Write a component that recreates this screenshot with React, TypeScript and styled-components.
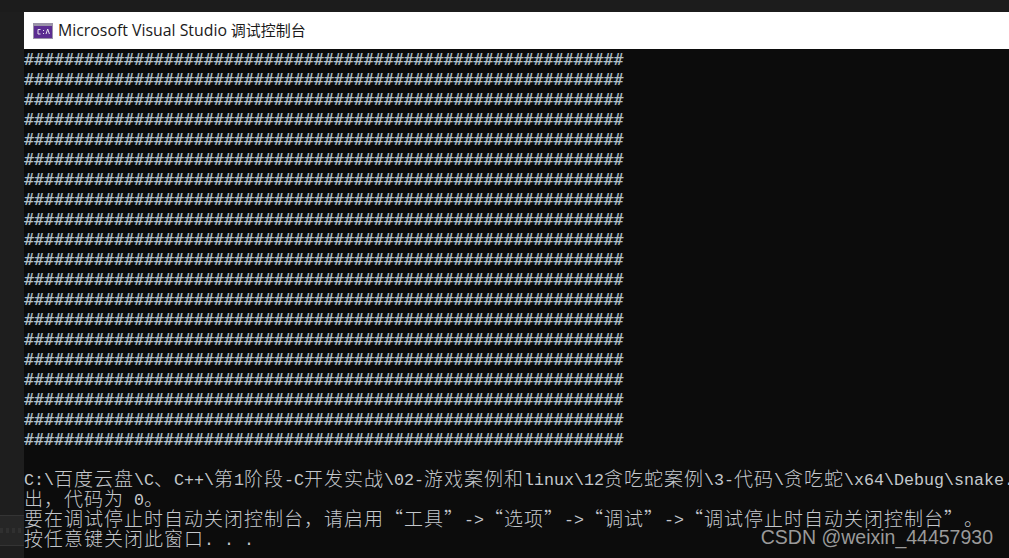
import React from 'react';
import styled, { createGlobalStyle } from 'styled-components';

const GlobalStyle = createGlobalStyle`
  html, body {
    margin: 0;
    padding: 0;
    width: 1009px;
    height: 558px;
    overflow: hidden;
    background: #1c1c1c;
  }
`;

const HASH_LINE = '#'.repeat(60);
const HASH_ROWS = Array.from({ length: 20 }, (_, i) => i);

const OUTPUT_LINES = [
  'C:\\百度云盘\\C、C++\\第1阶段-C开发实战\\02-游戏案例和linux\\12贪吃蛇案例\\3-代码\\贪吃蛇\\x64\\Debug\\snake.',
  '出，代码为 0。',
  '要在调试停止时自动关闭控制台，请启用“工具”->“选项”->“调试”->“调试停止时自动关闭控制台”。',
  '按任意键关闭此窗口. . .',
];

// console cells: ascii takes one 10px cell, everything else two
const splitCells = (line: string) => line.match(/[\x00-\x7f]+|[^\x00-\x7f]+/g) || [];

const App = () => {
  return (
    <>
      <GlobalStyle />
      <Page>
        <Sidebar>
          <SidebarStrip>
            <StripDots />
          </SidebarStrip>
        </Sidebar>
        <ConsoleWindow>
          <TitleBar>
            <AppIcon viewBox="0 0 20 16">
              <rect width="20" height="16" fill="#9a93a8" />
              <rect x="1" y="3" width="18" height="12" fill="#5c2d91" />
              <path d="M7.5 6.5H5v4.5h2.5M10 7.5h1M10 10.5h1M13 11l1.7-5 1.7 5" stroke="#e8e4f0" strokeWidth="1" fill="none" />
            </AppIcon>
            <WindowTitle>
              <TitleLatin>Microsoft Visual Studio</TitleLatin> 调试控制台
            </WindowTitle>
          </TitleBar>
          <ConsoleBody>
            <HashBlock>
              {HASH_ROWS.map((row) => (
                <HashLine key={row}>{HASH_LINE}</HashLine>
              ))}
            </HashBlock>
            <OutputBlock>
              {OUTPUT_LINES.map((line) => (
                <ConsoleLine key={line} lang="zh-CN">
                  {splitCells(line).map((part, i) =>
                    part.charCodeAt(0) > 127 ? <WideCells key={i}>{part}</WideCells> : <span key={i}>{part}</span>
                  )}
                </ConsoleLine>
              ))}
            </OutputBlock>
            <Watermark>CSDN @weixin_44457930</Watermark>
          </ConsoleBody>
        </ConsoleWindow>
      </Page>
    </>
  );
};

export default App;

const Page = styled.div`
  display: flex;
  width: 1009px;
  height: 558px;
  padding-top: 12px;
  box-sizing: border-box;
  overflow: hidden;
`;

const Sidebar = styled.div`
  display: flex;
  flex-direction: column;
  justify-content: flex-end;
  flex: 0 0 24px;
  padding-bottom: 12px;
  box-sizing: border-box;
  background: #1e1e1e;
`;

const SidebarStrip = styled.div`
  display: flex;
  align-items: center;
  height: 31px;
  box-sizing: border-box;
  background: #262626;
  border-top: 1px solid #343434;
  border-bottom: 1px solid #343434;
`;

const StripDots = styled.div`
  width: 100%;
  height: 5px;
  background: repeating-linear-gradient(90deg, #303030 0 3px, #262626 3px 6px);
`;

const ConsoleWindow = styled.div`
  display: flex;
  flex-direction: column;
  flex: 1;
  min-width: 0;
`;

const TitleBar = styled.div`
  display: flex;
  align-items: center;
  gap: 5px;
  flex: 0 0 37px;
  padding-left: 9px;
  background: #ffffff;
`;

const AppIcon = styled.svg`
  width: 20px;
  height: 16px;
`;

const WindowTitle = styled.span`
  padding-bottom: 2px;
  font-family: 'Open Sans', 'Noto Sans CJK SC', sans-serif;
  font-size: 15px;
  color: #1a1a1a;
  white-space: nowrap;
`;

const TitleLatin = styled.span`
  font-size: 15.85px;
`;

const ConsoleBody = styled.div`
  position: relative;
  flex: 1;
  padding-top: 1px;
  overflow: hidden;
  background: #0c0c0c;
`;

const HashBlock = styled.div`
  display: flex;
  flex-direction: column;
`;

const OutputBlock = styled.div`
  display: flex;
  flex-direction: column;
  margin-top: 18px;
`;

const ConsoleLine = styled.div`
  height: 20px;
  font-family: 'Liberation Mono', monospace;
  font-size: 16.67px;
  line-height: 20px;
  color: #c4c8cc;
  white-space: pre;
`;

const HashLine = styled(ConsoleLine)`
  font-family: 'DejaVu Sans Mono', monospace;
  font-size: 16.6px;
  color: #b4c0c6;
  text-shadow: -0.5px 0 rgba(50, 130, 210, 0.25);
`;

const WideCells = styled.span`
  font-family: 'Noto Sans CJK SC', sans-serif;
  font-size: 19px;
  font-weight: 300;
  letter-spacing: 1px;
  vertical-align: -1px;
  font-feature-settings: 'fwid';
  text-spacing-trim: space-all;
`;

const Watermark = styled.div`
  position: absolute;
  right: 16px;
  bottom: 9px;
  font-family: 'Liberation Sans', sans-serif;
  font-size: 19.5px;
  color: #9a9a9a;
  white-space: nowrap;
`;
